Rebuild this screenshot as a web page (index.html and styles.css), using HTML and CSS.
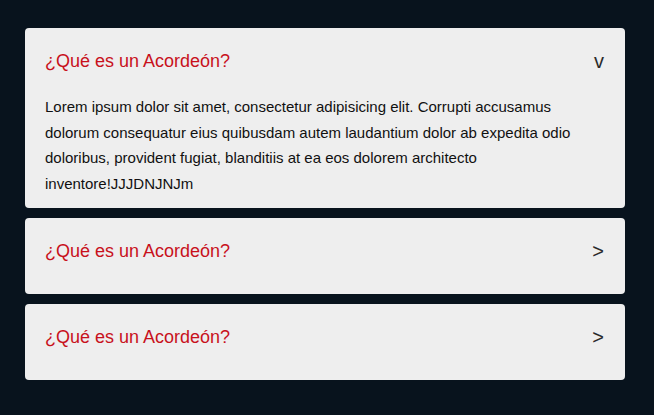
FILE: index.html
```html
<!DOCTYPE html>
<html lang="es">
<head>
<meta charset="utf-8">
<title>Acordeón</title>
<link rel="stylesheet" href="styles.css">
</head>
<body>
<div class="accordion">
  <div class="item open">
    <div class="header">
      <h2 class="title">¿Qué es un Acordeón?</h2>
      <span class="icon">v</span>
    </div>
    <p class="content">Lorem ipsum dolor sit amet, consectetur adipisicing elit. Corrupti accusamus dolorum consequatur eius quibusdam autem laudantium dolor ab expedita odio doloribus, provident fugiat, blanditiis at ea eos dolorem architecto inventore!JJJDNJNJm</p>
  </div>
  <div class="item">
    <div class="header">
      <h2 class="title">¿Qué es un Acordeón?</h2>
      <span class="icon">&gt;</span>
    </div>
  </div>
  <div class="item">
    <div class="header">
      <h2 class="title">¿Qué es un Acordeón?</h2>
      <span class="icon">&gt;</span>
    </div>
  </div>
</div>
</body>
</html>
```
FILE: styles.css
```css
html, body {
  margin: 0;
  padding: 0;
}
body {
  background: #08131d;
  font-family: "Liberation Sans", Arial, sans-serif;
  min-height: 415px;
}
.accordion {
  width: 600px;
  margin: 0 0 0 25px;
  padding-top: 28px;
  display: flex;
  flex-direction: column;
  gap: 10px;
}
.item {
  background: #eeeeee;
  border-radius: 4px;
  padding: 0 21px 10px 20px;
}
.header {
  height: 66px;
  display: flex;
  align-items: center;
  justify-content: space-between;
}
.title {
  margin: 0;
  font-size: 18px;
  font-weight: normal;
  color: #c8111c;
}
.icon {
  font-size: 20px;
  color: #2a2a2a;
}
.content {
  margin: 0;
  font-size: 15px;
  line-height: 25.5px;
  color: #111;
  padding-bottom: 2px;
}
```
